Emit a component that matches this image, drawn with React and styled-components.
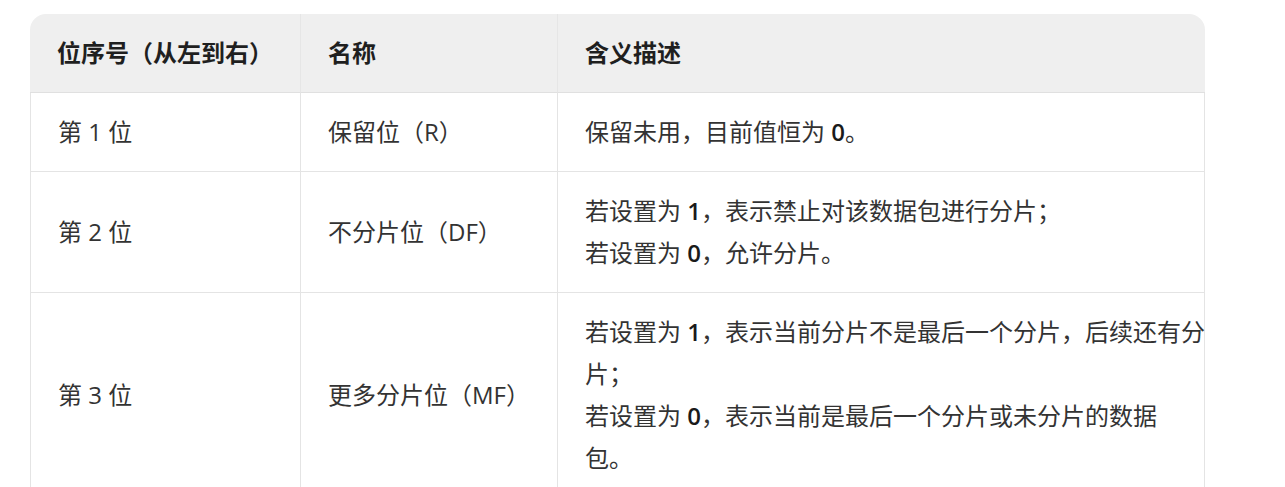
import React from "react";
import styled, { createGlobalStyle } from "styled-components";

const GlobalStyle = createGlobalStyle`
  body {
    margin: 0;
    background: #ffffff;
    font-family: "Open Sans", "Noto Sans CJK SC", sans-serif;
  }
`;

const Page = styled.div`
  padding: 14px 0 0 30px;
`;

const Table = styled.div`
  display: grid;
  grid-template-columns: 271px 257px 647px;
  width: 1175px;
  font-size: 24px;
  line-height: 42px;
`;

const Cell = styled.div`
  box-sizing: border-box;
  display: flex;
  flex-direction: column;
  justify-content: center;
  padding: 18px 0 18px 27px;
  border-bottom: 1px solid #e4e4e4;
  border-right: 1px solid #e4e4e4;
  color: #333333;
  ${(p) => p.$first && "border-left: 1px solid #e4e4e4;"}
`;

const HeadCell = styled(Cell)`
  background: #efefef;
  color: #1f1f1f;
  font-weight: 700;
  border-left: none;
  border-right: ${(p) => (p.$last ? "none" : "1px solid #e6e6e6")};
  border-bottom-color: #e0e0e0;
  border-top-left-radius: ${(p) => (p.$first ? "16px" : "0")};
  border-top-right-radius: ${(p) => (p.$last ? "16px" : "0")};
`;

const Line = styled.span`
  display: block;
  white-space: nowrap;
`;

const Num = styled.span`
  font-weight: 600;
  color: #1a1a1a;
`;

const rows = [
  { pos: "第 1 位", name: "保留位（R）", desc: [["保留未用，目前值恒为 ", "0", "。"]] },
  {
    pos: "第 2 位",
    name: "不分片位（DF）",
    desc: [
      ["若设置为 ", "1", "，表示禁止对该数据包进行分片；"],
      ["若设置为 ", "0", "，允许分片。"],
    ],
  },
  {
    pos: "第 3 位",
    name: "更多分片位（MF）",
    desc: [
      ["若设置为 ", "1", "，表示当前分片不是最后一个分片，后续还有分"],
      ["片；"],
      ["若设置为 ", "0", "，表示当前是最后一个分片或未分片的数据"],
      ["包。"],
    ],
  },
];

export default function App() {
  return (
    <Page>
      <GlobalStyle />
      <Table>
        <HeadCell $first>位序号（从左到右）</HeadCell>
        <HeadCell>名称</HeadCell>
        <HeadCell $last>含义描述</HeadCell>
        {rows.map((r) => (
          <React.Fragment key={r.pos}>
            <Cell $first>{r.pos}</Cell>
            <Cell>{r.name}</Cell>
            <Cell>
              {r.desc.map((d, i) => (
                <Line key={i}>
                  {d[0]}
                  {d[1] && <Num>{d[1]}</Num>}
                  {d[2]}
                </Line>
              ))}
            </Cell>
          </React.Fragment>
        ))}
      </Table>
    </Page>
  );
}
